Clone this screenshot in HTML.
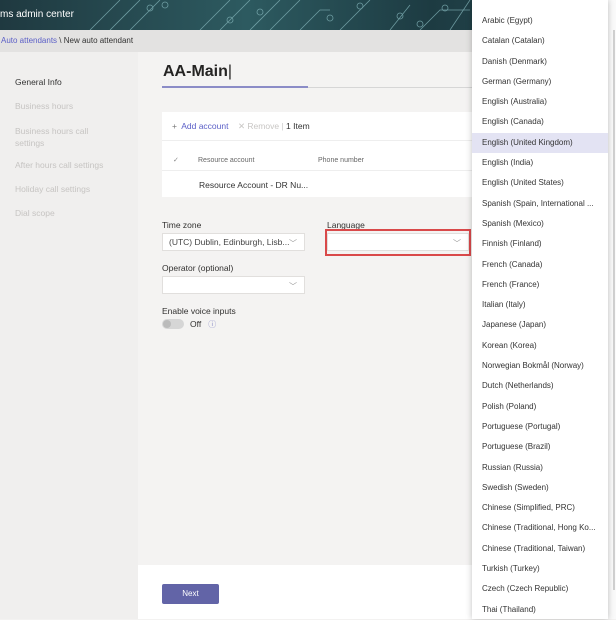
<!DOCTYPE html>
<html><head><style>
*{margin:0;padding:0;box-sizing:border-box}
body{width:616px;height:619px;overflow:hidden;position:relative;background:#f3f2f1;font-family:"Liberation Sans",sans-serif;color:#252423}
.a{position:absolute}
.banner{left:0;top:0;width:616px;height:30px;background:linear-gradient(90deg,#1f3940 0%,#2d5a60 40%,#1d3b42 70%,#2a4e55 100%);overflow:hidden}
.crumb{left:0;top:30px;width:616px;height:22px;background:#e3e2e1;font-size:8px;line-height:22px;padding-left:1px;color:#333}
.nav{left:0;top:52px;width:138px;height:567px;background:#f0efee}
.nav div{position:absolute;left:15px;font-size:8.5px;color:#c6c4c2}
.main{left:138px;top:52px;width:478px;height:513px;background:#f4f3f2}
.foot{left:138px;top:565px;width:478px;height:54px;background:#fff}
.lbl{font-size:8.5px;color:#323130}
.inp{background:#fff;border:1px solid #e1dfdd;height:18px;font-size:8.5px;line-height:16px;padding-left:6px;color:#444}
.chev{position:absolute;right:7px;top:2px;font-size:8px;color:#999}
.dd{left:472px;top:0;width:136px;height:619px;background:#fff;box-shadow:0 0 6px rgba(0,0,0,.25)}
.dd div{height:20.3px;line-height:20.3px;padding-left:10px;font-size:8px;color:#333;white-space:nowrap}
</style></head><body>
<div class="a banner">
<svg width="616" height="30" style="position:absolute;left:0;top:0" stroke="#7fb0b5" stroke-width="0.8" fill="none" opacity="0.8">
<path d="M90 30 L120 0 M110 30 L140 0 M130 30 L160 0 M200 30 L230 0 M220 30 L250 0 M300 30 L320 10 L330 10 M340 30 L370 0 M390 30 L410 5 M420 30 L440 10 L470 10 M450 30 L470 0 M250 30 L280 0 M270 30 L300 0"/>
<circle cx="150" cy="8" r="3"/><circle cx="165" cy="5" r="3"/><circle cx="230" cy="20" r="3"/><circle cx="260" cy="12" r="3"/><circle cx="330" cy="18" r="3"/><circle cx="360" cy="6" r="3"/><circle cx="400" cy="16" r="3"/><circle cx="420" cy="24" r="3"/><circle cx="445" cy="8" r="3"/>
</svg>
<div class="a" style="left:0;top:9px;color:#fff;font-size:10px">ms admin center</div>
</div>
<div class="a crumb"><span style="color:#5b5fc7">Auto attendants</span> \ New auto attendant</div>
<div class="a nav">
<div style="top:25px;color:#333">General Info</div>
<div style="top:49px">Business hours</div>
<div style="top:73px;line-height:12px">Business hours call<br>settings</div>
<div style="top:108px">After hours call settings</div>
<div style="top:132px">Holiday call settings</div>
<div style="top:156px">Dial scope</div>
</div>
<div class="a main"></div>
<div class="a foot"></div>
<div class="a" style="left:163px;top:63px;font-size:16px;font-weight:bold;color:#252423">AA-Main<span style="font-weight:normal">|</span></div>
<div class="a" style="left:162px;top:87px;width:320px;height:1px;background:#d6d6d6"></div>
<div class="a" style="left:162px;top:86px;width:146px;height:2px;background:#8b8cc7"></div>
<div class="a" style="left:162px;top:112px;width:320px;height:85px;background:#fff"></div>
<div class="a" style="left:162px;top:140px;width:320px;height:1px;background:#eee"></div>
<div class="a" style="left:162px;top:170px;width:320px;height:1px;background:#eee"></div>
<div class="a" style="left:172px;top:121px;font-size:8.5px;color:#5b5fc7"><span style="color:#777">+</span>&nbsp; Add account&nbsp;&nbsp;&nbsp; <span style="color:#c8c6c4">✕ Remove</span> <span style="color:#ccc">|</span> <span style="color:#333">1 Item</span></div>
<div class="a" style="left:173px;top:156px;font-size:7px;color:#888">✓</div>
<div class="a" style="left:198px;top:157px;font-size:7px;color:#666">Resource account</div>
<div class="a" style="left:318px;top:157px;font-size:7px;color:#666">Phone number</div>
<div class="a" style="left:199px;top:180px;font-size:8.5px;color:#333">Resource Account - DR Nu...</div>
<div class="a lbl" style="left:162px;top:220px">Time zone</div>
<div class="a inp" style="left:162px;top:233px;width:143px">(UTC) Dublin, Edinburgh, Lisb...<span class="chev">﹀</span></div>
<div class="a lbl" style="left:327px;top:220px">Language</div>
<div class="a inp" style="left:327px;top:233px;width:142px"><span class="chev">﹀</span></div>
<div class="a" style="left:325px;top:229px;width:146px;height:27px;border:2px solid #d9494a"></div>
<div class="a lbl" style="left:162px;top:263px">Operator (optional)</div>
<div class="a inp" style="left:162px;top:276px;width:143px"><span class="chev">﹀</span></div>
<div class="a lbl" style="left:162px;top:306px">Enable voice inputs</div>
<div class="a" style="left:162px;top:319px;width:22px;height:10px;border-radius:5px;background:#d6d6d6"></div>
<div class="a" style="left:163px;top:320px;width:8px;height:8px;border-radius:4px;background:#bbb"></div>
<div class="a lbl" style="left:190px;top:319px">Off &nbsp;&nbsp;<span style="color:#8b8cc7;font-size:8px">ⓘ</span></div>
<div class="a" style="left:162px;top:584px;width:57px;height:20px;background:#6264a7;border-radius:2px;color:#fff;font-size:8px;text-align:center;line-height:20px">Next</div>
<div class="a" style="left:608px;top:0;width:8px;height:619px;background:#fafafa"></div>
<div class="a" style="left:613px;top:30px;width:2px;height:560px;background:#d0d0d0"></div>
<div class="a dd" style="padding-top:11px">
<div>Arabic (Egypt)</div><div>Catalan (Catalan)</div><div>Danish (Denmark)</div><div>German (Germany)</div><div>English (Australia)</div><div>English (Canada)</div><div style="background:#e3e3f3">English (United Kingdom)</div><div>English (India)</div><div>English (United States)</div><div>Spanish (Spain, International ...</div><div>Spanish (Mexico)</div><div>Finnish (Finland)</div><div>French (Canada)</div><div>French (France)</div><div>Italian (Italy)</div><div>Japanese (Japan)</div><div>Korean (Korea)</div><div>Norwegian Bokmål (Norway)</div><div>Dutch (Netherlands)</div><div>Polish (Poland)</div><div>Portuguese (Portugal)</div><div>Portuguese (Brazil)</div><div>Russian (Russia)</div><div>Swedish (Sweden)</div><div>Chinese (Simplified, PRC)</div><div>Chinese (Traditional, Hong Ko...</div><div>Chinese (Traditional, Taiwan)</div><div>Turkish (Turkey)</div><div>Czech (Czech Republic)</div><div>Thai (Thailand)</div>
</div>
</body></html>
